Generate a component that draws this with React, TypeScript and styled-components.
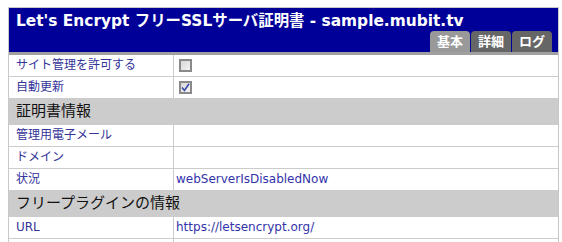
import styled, { createGlobalStyle } from 'styled-components'

const Global = createGlobalStyle`
  html, body { margin: 0; padding: 0; background: #fff; }
  body {
    font-family: 'DejaVu Sans', 'Noto Sans CJK JP', sans-serif;
    -webkit-font-smoothing: antialiased;
  }
`

const Page = styled.div`
  padding: 7px 0 0 8px;
`

const Panel = styled.div`
  width: 549px;
  border: 1px solid #c8c8c8;
  border-bottom: none;
`

// ─── Header ───────────────────────────────────────────────────────────────────
const Header = styled.div`
  height: 44px;
  background: #000099;
  display: flex;
  flex-direction: column;
`

const Title = styled.h1`
  margin: 0;
  padding: 3px 0 0 7px;
  color: #fff;
  font-size: 15.4px;
  font-weight: 700;
  line-height: 20px;
  white-space: nowrap;
`

const Tabs = styled.div`
  margin-top: auto;
  display: flex;
  justify-content: flex-end;
  gap: 1px;
  padding-right: 6px;
`

const Tab = styled.div<{ $active?: boolean }>`
  width: 40px;
  height: 21px;
  border-radius: 4px 4px 0 0;
  background: ${p => (p.$active ? '#999999' : '#666666')};
  color: #fff;
  font-size: 13px;
  font-weight: 700;
  line-height: 22px;
  text-align: center;
`

const TabRule = styled.div`
  height: 3px;
  background: #a0a0a0;
`

// ─── Table ────────────────────────────────────────────────────────────────────
const Row = styled.div`
  display: grid;
  grid-template-columns: 165px 1fr;
  border-bottom: 1px solid #cccccc;
  min-height: 19px;
`

const Label = styled.div`
  padding: 0 7px;
  border-right: 1px solid #cccccc;
  color: #333399;
  font-size: 12px;
  line-height: 21px;
  &:empty { line-height: 19px; }
`

const Value = styled.div`
  padding: 0 2px;
  color: #3333aa;
  font-size: 12px;
  line-height: 21px;
  display: flex;
  align-items: center;
`

const Section = styled.div`
  height: 25px;
  background: #cccccc;
  padding: 0 7px;
  color: #111;
  font-size: 15px;
  line-height: 25px;
  border-bottom: 1px solid #cccccc;
`

const Box = styled.span`
  width: 13px;
  height: 13px;
  margin-left: 3px;
  box-sizing: border-box;
  border: 2px solid #8a8a8a;
  background: linear-gradient(135deg, #d8d8d8, #f4f4f4);
  display: inline-flex;
  align-items: center;
  justify-content: center;
`

function Check({ checked }: { checked?: boolean }) {
  return (
    <Box>
      {checked && (
        <svg width="9" height="9" viewBox="0 0 9 9">
          <path d="M1 4.5 L3.5 7.5 L8 0.8" fill="none" stroke="#3a4aa8" strokeWidth="1.6" />
        </svg>
      )}
    </Box>
  )
}

export default function App() {
  return (
    <Page>
      <Global />
      <Panel>
        <Header>
          <Title>Let's Encrypt フリーSSLサーバ証明書 - sample.mubit.tv</Title>
          <Tabs>
            <Tab $active>基本</Tab>
            <Tab>詳細</Tab>
            <Tab>ログ</Tab>
          </Tabs>
        </Header>
        <TabRule />
        <Row>
          <Label>サイト管理を許可する</Label>
          <Value><Check /></Value>
        </Row>
        <Row>
          <Label>自動更新</Label>
          <Value><Check checked /></Value>
        </Row>
        <Section>証明書情報</Section>
        <Row>
          <Label>管理用電子メール</Label>
          <Value />
        </Row>
        <Row>
          <Label>ドメイン</Label>
          <Value />
        </Row>
        <Row>
          <Label>状況</Label>
          <Value>webServerIsDisabledNow</Value>
        </Row>
        <Section>フリープラグインの情報</Section>
        <Row>
          <Label>URL</Label>
          <Value>https://letsencrypt.org/</Value>
        </Row>
        <Row>
          <Label />
          <Value />
        </Row>
      </Panel>
    </Page>
  )
}
